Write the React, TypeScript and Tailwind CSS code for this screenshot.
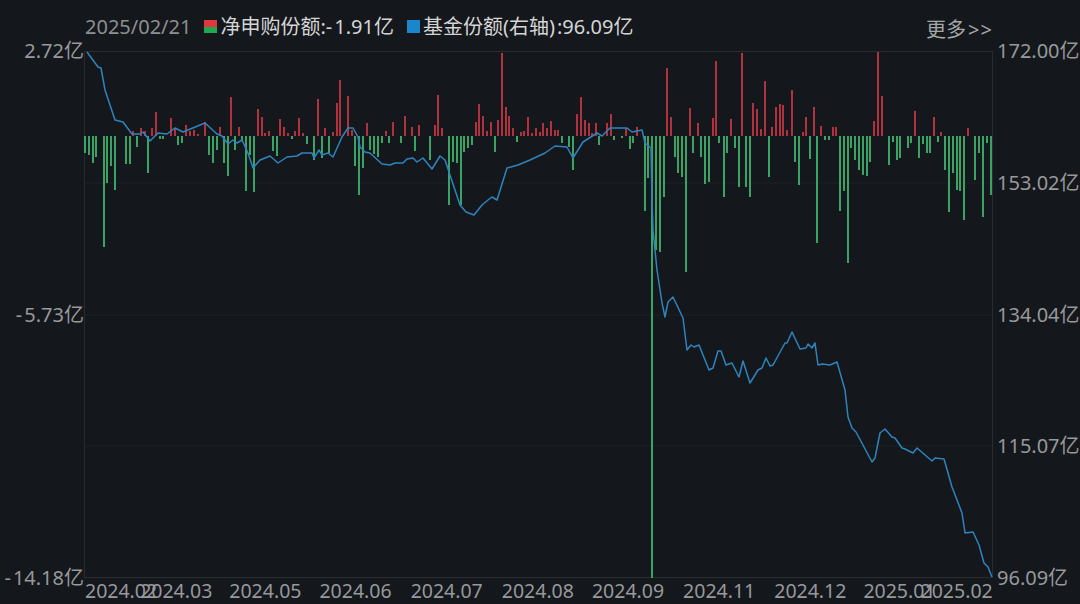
const FONT = "font-['Noto_Sans','Noto_Sans_CJK_SC',sans-serif]"

// [x, y of bar end], in page pixels. The zero line sits at y=136
const RED_BARS = [
  [133,131],[141,128],[145,131],[152,128],[156,112],[171,118],[175,128],[186,125],[190,131],[194,130],[198,134],[205,122],[220,127],
  [231,97],[239,127],[258,109],[262,117],[265,133],[269,131],[280,119],[284,127],[288,133],[295,131],[299,118],[303,133],[318,99],
  [325,128],[333,132],[337,103],[340,80],[348,96],[352,130],[367,123],[386,131],[393,122],[405,116],[412,127],[419,125],[435,125],
  [438,95],[442,128],[476,122],[479,104],[483,116],[487,131],[491,122],[498,120],[502,53],[506,107],[509,116],[513,128],[521,132],
  [524,131],[528,117],[532,133],[536,128],[540,132],[543,123],[547,128],[551,121],[555,130],[558,130],[577,114],[581,97],[585,120],
  [589,123],[592,133],[596,123],[607,123],[611,114],[626,128],[637,127],[667,68],[671,117],[690,108],[698,123],[713,118],[716,61],
  [731,119],[742,53],[753,103],[757,109],[761,129],[765,81],[772,127],[776,107],[780,104],[783,105],[787,130],[792,90],[803,132],
  [806,117],[814,107],[821,126],[833,127],[836,127],[874,121],[878,52],[882,96],[915,111],[934,117],[941,132],[968,128],
]

const GREEN_BARS = [
  [85,153],[89,155],[93,163],[96,157],[104,247],[107,183],[111,166],[115,190],[126,164],[130,164],[137,147],[148,173],[160,139],[163,139],
  [178,145],[182,143],[209,155],[213,163],[217,150],[224,163],[228,176],[235,150],[242,140],[246,191],[250,155],[254,192],[273,151],
  [277,156],[292,139],[307,144],[314,160],[322,158],[329,153],[355,166],[359,195],[363,168],[370,150],[374,154],[378,157],[382,143],
  [389,143],[401,143],[415,151],[430,160],[449,205],[453,162],[457,163],[461,205],[464,152],[468,148],[472,145],[495,152],[517,142],
  [562,143],[569,147],[573,170],[599,145],[614,140],[622,138],[630,149],[633,143],[645,211],[648,178],[652,578],[656,250],[660,252],
  [664,197],[675,157],[678,173],[682,177],[686,272],[693,153],[701,157],[705,184],[709,182],[719,143],[724,197],[727,153],[735,148],
  [739,187],[746,187],[750,197],[769,177],[795,162],[799,185],[810,159],[817,243],[825,140],[829,140],[840,211],[844,191],[848,263],
  [851,148],[855,160],[859,170],[863,175],[867,176],[870,162],[889,165],[893,142],[897,160],[900,158],[908,148],[911,143],[919,158],
  [923,144],[927,153],[930,153],[938,142],[945,170],[949,212],[953,173],[957,190],[960,191],[964,220],[975,180],[979,153],[983,217],
  [987,143],[991,195],
]

const LINE = [
  [87,52],[98,67],[101,68],[105,90],[115,120],[123,122],[132,134],[140,134],[143,132],[150,141],[158,133],[167,134],[175,128],[183,132],
  [205,123],[217,134],[222,136],[228,144],[233,140],[237,143],[242,140],[248,153],[253,168],[260,160],[270,156],[278,163],[287,157],
  [297,156],[302,153],[312,153],[314,158],[319,150],[322,155],[328,153],[333,157],[342,137],[348,128],[353,128],[358,137],[360,147],
  [365,152],[370,153],[382,164],[390,165],[395,163],[403,163],[407,159],[413,158],[417,162],[423,158],[432,169],[440,156],[445,160],
  [450,175],[460,205],[466,212],[474,215],[482,205],[488,200],[492,197],[497,200],[507,168],[518,165],[530,160],[545,153],[555,146],
  [567,147],[573,158],[583,142],[597,133],[602,136],[610,128],[627,128],[632,132],[642,130],[645,143],[651,148],[652,200],[653,230],
  [657,270],[662,303],[665,317],[668,302],[673,297],[683,318],[687,350],[691,345],[694,347],[699,345],[709,370],[713,368],[718,351],
  [721,351],[726,365],[732,363],[739,377],[743,361],[750,383],[758,370],[762,368],[766,358],[770,366],[773,365],[785,343],[787,343],
  [792,332],[800,349],[806,348],[808,344],[812,348],[815,343],[818,365],[822,364],[830,365],[837,362],[845,390],[848,417],[852,428],
  [856,432],[872,462],[875,458],[880,433],[885,429],[892,437],[895,438],[902,448],[905,449],[913,453],[917,448],[932,461],[935,458],
  [944,459],[952,487],[962,513],[965,533],[973,532],[979,545],[984,563],[988,567],[992,577],
]

const X_LABELS = [
  { text: '2024.02', cls: '' },
  { text: '2024.03', cls: 'ml-[-17px]' },
  { text: '2024.05', cls: 'ml-[17px]' },
  { text: '2024.06', cls: 'ml-[18px]' },
  { text: '2024.07', cls: 'ml-[19px]' },
  { text: '2024.08', cls: 'ml-[19px]' },
  { text: '2024.09', cls: 'ml-[18px]' },
  { text: '2024.11', cls: 'ml-[19px]' },
  { text: '2024.12', cls: 'ml-[19px]' },
  { text: '2025.01', cls: 'ml-[17px]' },
  { text: '2025.02', cls: 'ml-[-15px]' },
]

const Chart = () => (
  <svg viewBox="84 51 909 527" className="h-[527px] w-[909px] shrink-0 overflow-visible">
    {[183, 315, 446].map((y) => (
      <line key={y} x1="84" x2="993" y1={y} y2={y} stroke="#1d2125" strokeWidth="1" />
    ))}
    <rect x="84.5" y="51.5" width="908" height="526" fill="none" stroke="#282b2f" strokeWidth="1" />
    {RED_BARS.map(([x, y]) => (
      <line key={x} x1={x} x2={x} y1="136" y2={y} stroke="#d93a48" strokeWidth="1.6" />
    ))}
    {GREEN_BARS.map(([x, y]) => (
      <line key={x} x1={x} x2={x} y1="136" y2={y} stroke="#45c878" strokeWidth="1.6" />
    ))}
    <polyline
      points={LINE.map((p) => p.join(',')).join(' ')}
      fill="none"
      stroke="#2f84bd"
      strokeWidth="1.5"
      strokeLinejoin="round"
    />
  </svg>
)

export default function App() {
  return (
    <div className={`flex h-[604px] w-[1080px] flex-col overflow-hidden bg-[#14171b] text-[20px] leading-[28px] text-[#97999b] ${FONT}`}>
      {/* Legend */}
      <div className="flex h-[51px] shrink-0 items-start pl-[85px] pt-[13px]">
        <span className="text-[#8d8f91]">2025/02/21</span>
        <span className="ml-[13px] mt-[7px] flex h-[13px] w-[13px] flex-col">
          <span className="h-1/2 bg-[#e0383e]" />
          <span className="h-1/2 bg-[#1fa84f]" />
        </span>
        <span className="ml-[3px] text-[#d4d5d6]">
          净申购份额:<span className="mr-[2px]">-</span>1.91亿
        </span>
        <span className="ml-[13px] mt-[7px] h-[13px] w-[13px] bg-[#1a86cc]" />
        <span className="ml-[3px] text-[#d4d5d6]">
          基金份额(右轴)<span className="ml-[2px]">:</span>96.09亿
        </span>
        <span className="ml-auto mr-[87px] mt-[3px] text-[#a4a6a8]">
          更多<span className="ml-[2px] tracking-[1px]">&gt;&gt;</span>
        </span>
      </div>

      {/* Axes and plot */}
      <div className="flex h-[527px] shrink-0">
        <div className="my-[-14px] flex w-[84px] shrink-0 flex-col items-end justify-between">
          <span>2.72亿</span>
          <span><span className="mr-[2px]">-</span>5.73亿</span>
          <span><span className="mr-[2px]">-</span>14.18亿</span>
        </div>
        <Chart />
        <div className="my-[-14px] flex flex-1 flex-col justify-between pl-[4px]">
          <span>172.00亿</span>
          <span>153.02亿</span>
          <span>134.04亿</span>
          <span>115.07亿</span>
          <span>96.09亿</span>
        </div>
      </div>

      {/* Date axis */}
      <div className="flex h-[26px] shrink-0 pl-[85px] text-[19.5px] leading-[26px]">
        {X_LABELS.map((l) => (
          <span key={l.text} className={l.cls}>{l.text}</span>
        ))}
      </div>
    </div>
  )
}
